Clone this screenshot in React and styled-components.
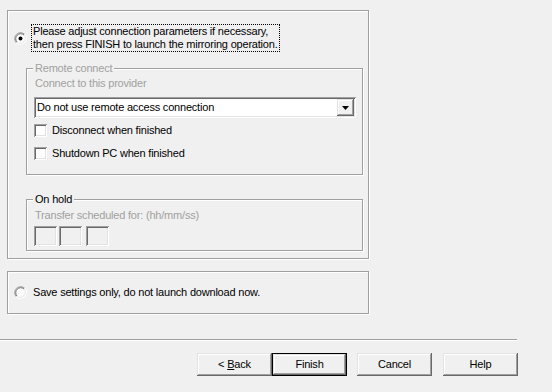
import React from "react";
import styled, { createGlobalStyle } from "styled-components";

const GlobalStyle = createGlobalStyle`
  html, body { margin: 0; padding: 0; background: #f0f0f0; }
  body {
    font-family: "Liberation Sans", Arial, sans-serif;
    font-size: 11px;
    letter-spacing: -0.2px;
    color: #000;
  }
  * { box-sizing: border-box; }
`;

const Page = styled.div`
  width: 552px;
  height: 392px;
  display: flex;
  flex-direction: column;
  overflow: hidden;
`;

const Content = styled.div`
  display: flex;
  flex-direction: column;
  gap: 12px;
  padding: 10px 0 0 7px;
`;

const OptionPanel = styled.div`
  width: 362px;
  height: ${(p) => p.$h}px;
  border: 1px solid #a0a0a0;
  box-shadow: inset 1px 1px 0 #fff, 1px 1px 0 #fff;
  display: flex;
  flex-direction: column;
  justify-content: ${(p) => (p.$center ? "center" : "flex-start")};
  padding-top: ${(p) => (p.$center ? 0 : 13)}px;
`;

const RadioRow = styled.div`
  display: flex;
  align-items: center;
  gap: 4px;
  padding-left: 6px;
`;

const RadioLabel = styled.div`
  border: 1px dotted ${(p) => (p.$focus ? "#000" : "transparent")};
  padding: 0 1px;
  line-height: 13px;
  white-space: nowrap;
`;

const Group = styled.div`
  margin: ${(p) => p.$mt}px 0 0 18px;
  width: 337px;
  border: 1px solid #a0a0a0;
  box-shadow: inset 1px 1px 0 #fff, 1px 1px 0 #fff;
  display: flex;
  flex-direction: column;
  align-items: flex-start;
  padding-bottom: ${(p) => p.$pb}px;
`;

const Caption = styled.div`
  margin: -7px 0 0 6px;
  padding: 0 2px;
  background: #f0f0f0;
  line-height: 13px;
  color: ${(p) => (p.$disabled ? "#a0a0a0" : "#000")};
  white-space: nowrap;
`;

const Hint = styled.div`
  margin: ${(p) => p.$mt}px 0 0 8px;
  line-height: 13px;
  color: #a0a0a0;
  white-space: nowrap;
`;

const sunken = `
  box-shadow: inset 1px 1px 0 #a0a0a0, inset -1px -1px 0 #fff,
    inset 2px 2px 0 #696969, inset -2px -2px 0 #e3e3e3;
`;

const raised = `
  box-shadow: inset -1px -1px 0 #696969, inset 1px 1px 0 #e3e3e3,
    inset -2px -2px 0 #a0a0a0, inset 2px 2px 0 #fff;
`;

const Combo = styled.div`
  margin: 7px 0 0 7px;
  width: 322px;
  height: 21px;
  background: #fff;
  ${sunken}
  display: flex;
  align-items: center;
  padding: 2px;
`;

const ComboText = styled.div`
  flex: 1;
  padding-left: 1px;
  line-height: 13px;
  white-space: nowrap;
`;

const ComboButton = styled.div`
  width: 17px;
  height: 17px;
  background: #f0f0f0;
  ${raised}
  display: flex;
  align-items: center;
  justify-content: center;
`;

const CheckRow = styled.div`
  display: flex;
  align-items: center;
  gap: 5px;
  margin: ${(p) => p.$mt}px 0 0 7px;
  line-height: 13px;
`;

const CheckBox = styled.span`
  display: block;
  width: 13px;
  height: 13px;
  background: #fff;
  ${sunken}
`;

const EditRow = styled.div`
  display: flex;
  margin: 4px 0 0 7px;
`;

const EditBox = styled.div`
  width: 23px;
  height: 20px;
  margin-left: ${(p) => p.$ml || 0}px;
  background: #f0f0f0;
  ${sunken}
`;

const Separator = styled.div`
  margin-top: 25px;
  width: 517px;
  height: 2px;
  border-top: 1px solid #a0a0a0;
  border-bottom: 1px solid #fff;
`;

const ButtonRow = styled.div`
  display: flex;
  margin-top: 12px;
  padding-left: 197px;
`;

const Button = styled.button`
  width: 75px;
  height: 23px;
  margin: 0 0 0 ${(p) => p.$ml || 0}px;
  padding: 0;
  border: ${(p) => (p.$default ? "1px solid #000" : "none")};
  background: #f0f0f0;
  font: inherit;
  letter-spacing: inherit;
  color: #000;
  line-height: 13px;
  ${raised}
  text-align: center;
`;

const Radio = ({ checked }) => (
  <svg width="13" height="13" viewBox="0 0 13 13">
    <circle cx="6.5" cy="6.5" r="5.5" fill="#fff" />
    <path d="M2.26 10.74 A6 6 0 0 1 10.74 2.26" fill="none" stroke="#a0a0a0" />
    <path d="M10.74 2.26 A6 6 0 0 1 2.26 10.74" fill="none" stroke="#fff" />
    <path d="M2.97 10.03 A5 5 0 0 1 10.03 2.97" fill="none" stroke="#696969" />
    <path d="M10.03 2.97 A5 5 0 0 1 2.97 10.03" fill="none" stroke="#e3e3e3" />
    {checked && <circle cx="6.5" cy="6.5" r="2" fill="#000" />}
  </svg>
);

const Arrow = () => (
  <svg width="7" height="4" viewBox="0 0 7 4">
    <path d="M0 0 H7 L3.5 4 Z" fill="#000" />
  </svg>
);

export default function App() {
  return (
    <Page>
      <GlobalStyle />
      <Content>
        <OptionPanel $h={249}>
          <RadioRow>
            <Radio checked />
            <RadioLabel $focus>
              Please adjust connection parameters if necessary,
              <br />
              then press FINISH to launch the mirroring operation.
            </RadioLabel>
          </RadioRow>
          <Group $mt={16} $pb={14}>
            <Caption $disabled>Remote connect</Caption>
            <Hint $mt={2}>Connect to this provider</Hint>
            <Combo>
              <ComboText>Do not use remote access connection</ComboText>
              <ComboButton>
                <Arrow />
              </ComboButton>
            </Combo>
            <CheckRow $mt={6}>
              <CheckBox />
              Disconnect when finished
            </CheckRow>
            <CheckRow $mt={10}>
              <CheckBox />
              Shutdown PC when finished
            </CheckRow>
          </Group>
          <Group $mt={24} $pb={4}>
            <Caption>On hold</Caption>
            <Hint $mt={3}>Transfer scheduled for: (hh/mm/ss)</Hint>
            <EditRow>
              <EditBox />
              <EditBox $ml={2} />
              <EditBox $ml={4} />
            </EditRow>
          </Group>
        </OptionPanel>
        <OptionPanel $h={43} $center>
          <RadioRow>
            <Radio />
            <RadioLabel>Save settings only, do not launch download now.</RadioLabel>
          </RadioRow>
        </OptionPanel>
      </Content>
      <Separator />
      <ButtonRow>
        <Button>
          &lt; <u>B</u>ack
        </Button>
        <Button $default>Finish</Button>
        <Button $ml={10}>Cancel</Button>
        <Button $ml={11}>Help</Button>
      </ButtonRow>
    </Page>
  );
}
